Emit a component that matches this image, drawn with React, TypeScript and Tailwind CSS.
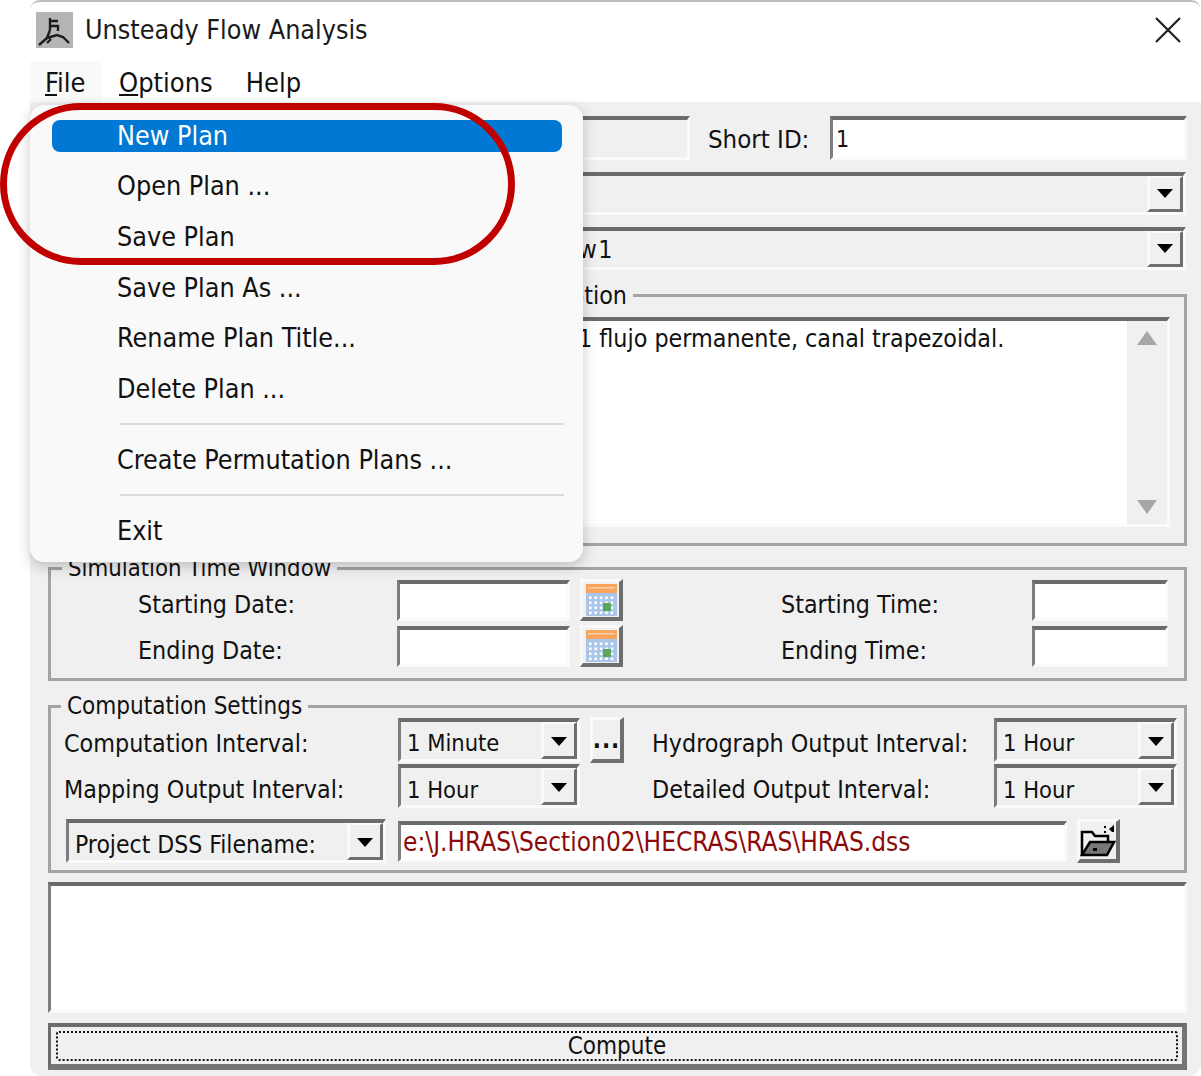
const sunken = 'border-t-[4px] border-l-[3px] border-r-[3px] border-b-[3px] border-t-[#6b6b6b] border-l-[#7d7d7d] border-r-[#fafafa] border-b-[#fafafa]'
const raised = 'border-t-[3px] border-l-[3px] border-r-[4px] border-b-[4px] border-t-[#fafafa] border-l-[#fafafa] border-r-[#6e6e6e] border-b-[#6e6e6e]'
const frame = 'relative border-[3px] border-[#a3a3a3]'

function DropArrow({ iconClass = '' }: { iconClass?: string }) {
  return (
    <div className="w-[36px] h-full shrink-0 flex items-center justify-center border-t-[2px] border-l-[3px] border-r-[3px] border-b-[3px] border-t-[#fafafa] border-l-[#fafafa] border-r-[#6e6e6e] border-b-[#6e6e6e]">
      <svg width="18" height="11" viewBox="0 0 18 11" className={iconClass}><path d="M1 1h16l-8 9z" fill="#000" /></svg>
    </div>
  )
}

function Select({ text, className, textClass = 'text-[23.5px]' }: { text: string; className: string; textClass?: string }) {
  return (
    <div className={`${className} ${sunken} shrink-0 flex items-center justify-between`}>
      <span className={`pl-[6px] pt-[8px] whitespace-nowrap ${textClass}`}>{text}</span>
      <DropArrow iconClass="mt-[3px]" />
    </div>
  )
}

function Calendar() {
  const dots = []
  for (let r = 0; r < 4; r++) for (let c = 0; c < 5; c++) dots.push(<rect key={`${r}-${c}`} x={3 + c * 5.4} y={12.5 + r * 5} width="2.6" height="2.6" fill="#fff" />)
  return (
    <div className={`w-[43px] h-[42px] shrink-0 flex items-center justify-center ${raised}`}>
      <svg width="31" height="32" viewBox="0 0 31 32">
        <rect x="0" y="8" width="31" height="24" fill="#a9c6ea" />
        {dots}
        <rect x="0" y="0" width="31" height="9" fill="#f9a45c" />
        <rect x="2" y="3" width="27" height="1.5" fill="#fcd0a4" />
        <rect x="17" y="19" width="8" height="8" fill="#5aa75a" />
      </svg>
    </div>
  )
}

function MenuItem({ label, active }: { label: string; active?: boolean }) {
  return (
    <div className={`h-[32px] ml-[22px] mr-[21px] pl-[65px] flex items-center rounded-[8px] ${active ? 'bg-[#0078d4] text-white' : 'text-[#111]'}`}>
      {label}
    </div>
  )
}

export default function App() {
  return (
    <div className="relative w-[1201px] h-[1076px] bg-white overflow-hidden text-[24.8px] leading-none text-[#111] font-['DejaVu_Sans_Condensed','Noto_Sans',sans-serif]">
      <div className="ml-[30px] w-[1171px] h-[1076px] rounded-tl-[10px] rounded-tr-[10px] rounded-bl-[12px] rounded-br-[12px] border-t-[2px] border-t-[#bdbdbd] overflow-hidden flex flex-col bg-white">
        {/* title bar */}
        <div className="h-[59px] shrink-0 flex items-center pl-[6px] pr-[20px] text-[26.7px]">
          <svg width="37" height="36" viewBox="0 0 37 36" className="mt-[-3px]">
            <rect width="37" height="36" fill="#b5b5b5" />
            <path d="M14 6v12M14 9h8M14 14h8v5M14 18l-3 8-8 7M11 26l10-3 6 2 6 6M15 27l-4 4" fill="none" stroke="#1c1c1c" strokeWidth="2.4" />
          </svg>
          <span className="ml-[12px] mt-[-3px] text-[#1a1a1a]">Unsteady Flow Analysis</span>
          <svg width="26" height="26" viewBox="0 0 26 26" className="ml-auto mt-[-3px]">
            <path d="M1 1l24 24M25 1L1 25" stroke="#1f1f1f" strokeWidth="2.2" />
          </svg>
        </div>
        {/* menu bar */}
        <div className="h-[41px] shrink-0 flex items-center text-[27px] pt-[2px]">
          <div className="w-[72px] h-[41px] mt-[-2px] bg-[#f9f9f9] pl-[15px] pt-[2px] flex items-center"><span><u>F</u>ile</span></div>
          <span className="ml-[17px]"><u>O</u>ptions</span>
          <span className="ml-[33px]">Help</span>
        </div>
        {/* dialog body */}
        <div className="flex-1 bg-[#f0f0f0] pl-[18px] pr-[14px] pt-[14px] flex flex-col">
          <div className="h-[44px] flex items-center">
            <span className="w-[112px]" />
            <div className={`w-[530px] h-full ${sunken}`} />
            <span className="ml-[18px] w-[122px] pt-[4px] text-[25.6px] whitespace-nowrap">Short ID:</span>
            <div className={`flex-1 h-full bg-white pl-[3px] pt-[2px] text-[23px] flex items-center ${sunken}`}>1</div>
          </div>
          <div className="h-[43px] mt-[12px] flex items-center">
            <span className="w-[112px]" />
            <div className={`w-[1026px] h-full flex justify-end ${sunken}`}><DropArrow /></div>
          </div>
          <div className="h-[43px] mt-[12px] flex items-center">
            <span className="w-[112px]" />
            <div className={`w-[1026px] h-full flex items-center justify-between ${sunken}`}>
              <span className="pl-[6px] pt-[2px] w-[451px] text-right tracking-[1.5px] whitespace-nowrap">Unsteady Flow1</span>
              <DropArrow />
            </div>
          </div>
          {/* plan description */}
          <div className={`h-[252px] mt-[24px] pt-[20px] pl-[10px] pr-[14px] ${frame}`}>
            <span className="absolute top-[-13px] right-[551px] pl-[6px] pr-[6px] bg-[#f0f0f0] whitespace-nowrap">Plan Description</span>
            <div className={`h-[210px] flex bg-white ${sunken}`}>
              <div className="flex-1 pl-[514px] pt-[6px] whitespace-nowrap">1 flujo permanente, canal trapezoidal.</div>
              <div className="w-[40px] bg-[#f0f0f0] flex flex-col items-center justify-between py-[10px]">
                <svg width="20" height="14" viewBox="0 0 20 14"><path d="M10 0l10 14H0z" fill="#a6a6a6" /></svg>
                <svg width="20" height="14" viewBox="0 0 20 14"><path d="M0 0h20L10 14z" fill="#a6a6a6" /></svg>
              </div>
            </div>
          </div>
          {/* simulation time window */}
          <div className={`h-[114px] mt-[21px] pt-[9px] pl-[86px] ${frame}`}>
            <span className="absolute top-[-13px] left-[11px] px-[6px] bg-[#f0f0f0] text-[23.7px] whitespace-nowrap">Simulation Time Window</span>
            <div className="h-[42px] flex items-center">
              <span className="w-[260px] pt-[10px] pl-[1px]">Starting Date:</span>
              <div className={`w-[173px] h-[41px] bg-white ${sunken}`} />
              <div className="ml-[10px]"><Calendar /></div>
              <span className="ml-[158px] w-[251px] pt-[10px]">Starting Time:</span>
              <div className={`w-[136px] h-[41px] bg-white ${sunken}`} />
            </div>
            <div className="h-[42px] mt-[4px] flex items-center">
              <span className="w-[260px] pt-[10px] pl-[1px]">Ending Date:</span>
              <div className={`w-[173px] h-[41px] bg-white ${sunken}`} />
              <div className="ml-[10px]"><Calendar /></div>
              <span className="ml-[158px] w-[251px] pt-[10px]">Ending Time:</span>
              <div className={`w-[136px] h-[41px] bg-white ${sunken}`} />
            </div>
          </div>
          {/* computation settings */}
          <div className={`h-[168px] mt-[24px] pt-[9px] pl-[13px] ${frame}`}>
            <span className="absolute top-[-14px] left-[10px] px-[6px] bg-[#f0f0f0] text-[24px] whitespace-nowrap">Computation Settings</span>
            <div className="h-[45px] flex items-center">
              <span className="w-[334px] pt-[10px] whitespace-nowrap">Computation Interval:</span>
              <Select text="1 Minute" className="w-[182px] h-[44px]" />
              <div className={`ml-[10px] w-[34px] h-[46px] flex items-center justify-center font-bold ${raised}`}>
                <span className="mt-[2px] text-[24px] tracking-[1px]">...</span>
              </div>
              <span className="ml-[28px] w-[342px] pt-[10px] whitespace-nowrap">Hydrograph Output Interval:</span>
              <Select text="1 Hour" className="w-[183px] h-[44px]" />
            </div>
            <div className="h-[44px] mt-[2px] flex items-center">
              <span className="w-[334px] pt-[8px] whitespace-nowrap">Mapping Output Interval:</span>
              <Select text="1 Hour" className="w-[182px] h-[44px]" />
              <span className="ml-[72px] w-[342px] pt-[8px] whitespace-nowrap">Detailed Output Interval:</span>
              <Select text="1 Hour" className="w-[183px] h-[44px]" />
            </div>
            <div className="h-[44px] mt-[11px] pl-[2px] flex items-center">
              <Select text="Project DSS Filename:" className="w-[320px] h-[44px]" textClass="text-[24.5px]" />
              <div className={`ml-[12px] w-[669px] h-[41px] bg-white pl-[2px] flex items-center text-[26px] text-[#8c0a0a] whitespace-nowrap ${sunken}`}>e:\J.HRAS\Section02\HECRAS\RAS\HRAS.dss</div>
              <div className={`ml-[10px] w-[43px] h-[44px] flex items-center justify-center ${raised}`}>
                <svg width="36" height="34" viewBox="0 0 36 34">
                  <path d="M2 31V8h10l3 4h13v6" fill="#f0f0f0" stroke="#000" strokeWidth="2.5" />
                  <path d="M2 31l8-13h24l-7 13z" fill="#777" stroke="#000" strokeWidth="2.5" />
                  <rect x="13" y="24" width="4" height="3" fill="#000" />
                  <path d="M24 2h2v2h-2zM24 7h2v2h-2zM29 5l5-4v7h-2z" fill="#000" />
                </svg>
              </div>
            </div>
          </div>
          {/* log box */}
          <div className={`h-[131px] mt-[9px] bg-white ${sunken}`} />
          {/* compute */}
          <div className="h-[47px] mt-[10px] border-t-[4px] border-l-[3px] border-r-[5px] border-b-[6px] border-t-[#6b6b6b] border-l-[#6b6b6b] border-r-[#757575] border-b-[#757575] p-[4px] pb-[3px] pl-[5px]">
            <div className="h-full border-[2px] border-dotted border-[#111] rounded-[3px] flex items-center justify-center text-[24px] text-[#111]">Compute</div>
          </div>
        </div>
      </div>
      {/* open File menu */}
      <div className="absolute left-[30px] top-[105px] w-[553px] h-[457px] bg-[#f9f9f9] rounded-[14px] shadow-[0_4px_14px_rgba(0,0,0,0.22)] pt-[15px] text-[26.7px]">
        <MenuItem label="New Plan" active />
        <div className="h-[18px]" />
        <MenuItem label="Open Plan ..." />
        <div className="h-[19px]" />
        <MenuItem label="Save Plan" />
        <div className="h-[19px]" />
        <MenuItem label="Save Plan As ..." />
        <div className="h-[18px]" />
        <MenuItem label="Rename Plan Title..." />
        <div className="h-[19px]" />
        <MenuItem label="Delete Plan ..." />
        <div className="mt-[18px] mb-[19px] ml-[90px] mr-[19px] h-[2px] bg-[#dcdcdc]" />
        <MenuItem label="Create Permutation Plans ..." />
        <div className="mt-[18px] mb-[19px] ml-[90px] mr-[19px] h-[2px] bg-[#dcdcdc]" />
        <MenuItem label="Exit" />
      </div>
      {/* red annotation */}
      <div className="absolute left-[0px] top-[103px] w-[515px] h-[162px] rounded-[81px] border-[7px] border-[#c00000]" />
    </div>
  )
}
